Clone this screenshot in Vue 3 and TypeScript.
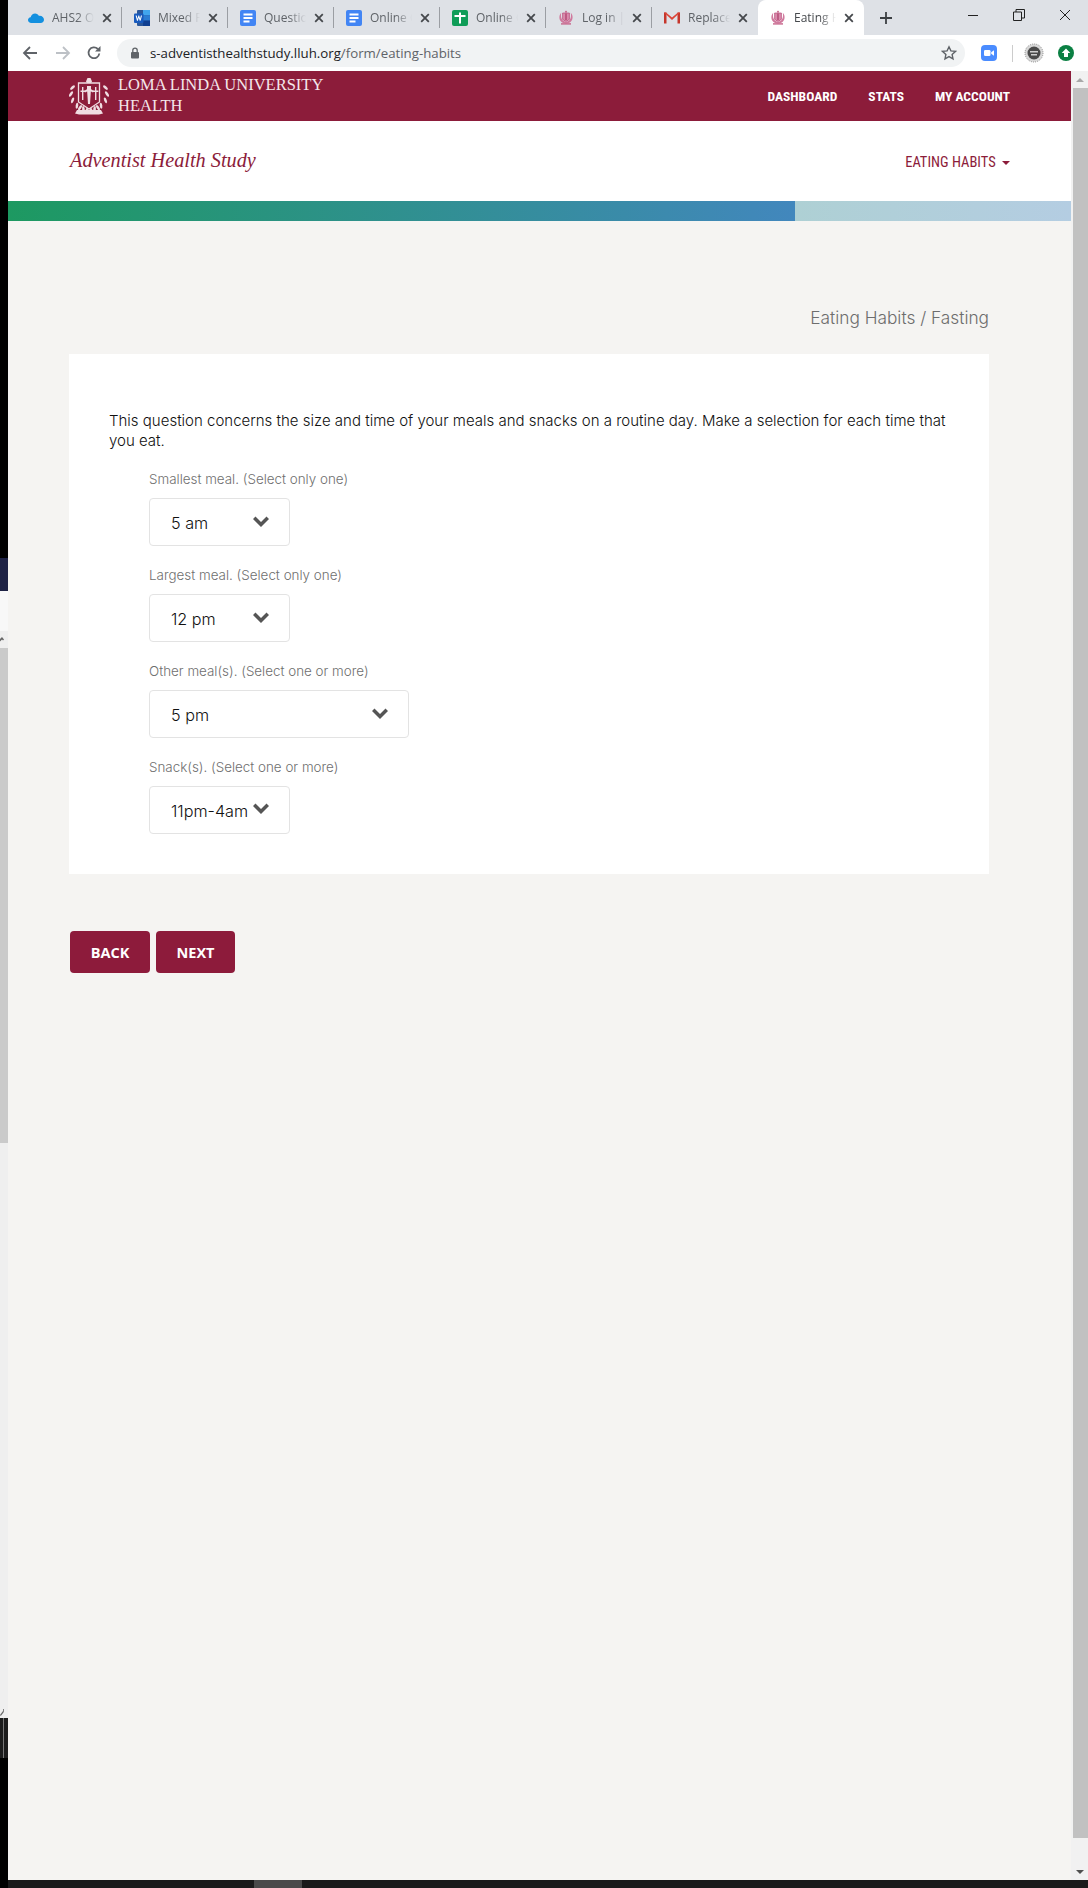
<template>
  <div class="screen">
    <!-- edge of the window behind the browser -->
    <div class="left-strip">
      <div class="seg black" style="height: 558px"></div>
      <div class="seg navy"></div>
      <div class="seg pale"></div>
      <div class="seg arrow-cell">
        <svg width="8" height="17" viewBox="0 0 8 17"><path d="M-3 11l5-5 2 2.500-1 1-1-1-4 4z" fill="#666" /></svg>
      </div>
      <div class="seg thumb-old"></div>
      <div class="seg track-old">
        <svg width="8" height="12" viewBox="0 0 8 12"><path d="M0 9l3-4v-2h0.800v3l-3 4z" fill="#666" /></svg>
      </div>
      <div class="seg dark-old"><span></span></div>
      <div class="seg black grow"></div>
    </div>

    <div class="browser">
      <svg width="0" height="0" class="defs">
        <symbol id="crest" viewBox="0 0 16 16">
          <path d="M8 .5l1.200 1.300L8 3 6.800 1.800z" fill="#c7648a" />
          <path d="M4.600 3h6.800v6.400L8 11.400 4.600 9.400z" fill="#d98bab" stroke="#b84a78" stroke-width=".7" />
          <path d="M7.400 3.600h1.200V10H7.400z" fill="#a93a69" />
          <path d="M3.200 2.800C1 5 .7 9 3 11.600c1.400 1.400 3 1.900 5 2 2-.1 3.600-.6 5-2 2.300-2.600 2-6.600-.2-8.800.5 3 .3 6-1.500 7.500-1 .9-2.100 1.200-3.300 1.300-1.200-.1-2.300-.4-3.300-1.300C2.900 8.800 2.700 5.800 3.200 2.800z" fill="#d07a9e" />
          <path d="M3 13.200h10v1.400H3z" fill="#c7648a" />
        </symbol>
        <symbol id="doc-blue" viewBox="0 0 16 16">
          <rect width="16" height="16" rx="2" fill="#4285f4" />
          <path d="M3.500 3.500h9v2h-9zM3.500 7h9v2h-9zM3.500 10.500h6v2h-6z" fill="#fff" />
        </symbol>
      </svg>

      <div class="tabbar">
        <div
          v-for="(tab, i) in tabs"
          :key="i"
          class="tab"
          :class="{ active: tab.active, 'no-sep': tab.active || tabs[i + 1]?.active }"
        >
          <svg class="tab-icon" width="16" height="16" viewBox="0 0 16 16">
            <path
              v-if="tab.icon === 'cloud'"
              d="M3.300 13C1.400 13 0 11.700 0 10.100c0-1.500 1.100-2.700 2.600-2.900C3.200 5 5 3.500 7.100 3.500c1.700 0 3.200 1 3.900 2.400 2.800-.4 5 1.500 5 3.900 0 1.800-1.400 3.200-3.300 3.200z"
              fill="#1490df"
            />
            <template v-else-if="tab.icon === 'word'">
              <rect x="3" y="0" width="13" height="16" rx="1" fill="#2b579a" />
              <rect x="9" y="0" width="7" height="5.300" fill="#41a5ee" />
              <rect x="9" y="5.300" width="7" height="5.300" fill="#2b7cd3" />
              <rect x="9" y="10.600" width="7" height="5.400" fill="#103f91" />
              <rect x="0" y="3.500" width="9.500" height="9.500" rx="1" fill="#185abd" />
              <path d="M1.600 5.600h1.100l.8 3.200.9-3.200h.8l.9 3.200.8-3.200H8l-1.400 5.200h-.9l-.9-3.100-.9 3.100H3z" fill="#fff" />
            </template>
            <use v-else-if="tab.icon === 'docs'" href="#doc-blue" />
            <template v-else-if="tab.icon === 'sheet'">
              <rect width="16" height="16" rx="2" fill="#0f9d58" />
              <path d="M7 2.500h2V5h4.500v2H9v6.500H7V7H2.500V5H7z" fill="#fff" />
            </template>
            <use v-else-if="tab.icon === 'crest'" href="#crest" />
            <template v-else>
              <path d="M0 2.500h2.500v11H0zM13.500 2.500H16v11h-2.500z" fill="#c5362b" />
              <path d="M0 2.500h2L8 7.500l6-5h2L8 10z" fill="#db4437" />
            </template>
          </svg>
          <span class="tab-title">{{ tab.title }}</span>
          <svg class="tab-close" width="10" height="10" viewBox="0 0 10 10">
            <path d="M1.200 1.200l7.600 7.600M8.800 1.200L1.200 8.800" stroke="#45484c" stroke-width="1.800" />
          </svg>
        </div>
        <svg class="new-tab" width="14" height="14" viewBox="0 0 14 14">
          <path d="M7 1v12M1 7h12" stroke="#3c4043" stroke-width="1.800" />
        </svg>
        <div class="win-buttons">
          <svg width="12" height="12" viewBox="0 0 12 12"><path d="M1 6.500h10" stroke="#222" /></svg>
          <svg width="12" height="12" viewBox="0 0 12 12">
            <path d="M.5 3h8v8.500h-8zM3 3V.5h8.500V9H8.500" fill="none" stroke="#222" />
          </svg>
          <svg width="12" height="12" viewBox="0 0 12 12"><path d="M1 1l10 10M11 1L1 11" stroke="#222" /></svg>
        </div>
      </div>

      <div class="toolbar">
        <svg class="tool back" width="16" height="16" viewBox="0 0 16 16">
          <path d="M15 8H2.500M8 2L2 8l6 6" fill="none" stroke="#5f6368" stroke-width="1.800" />
        </svg>
        <svg class="tool forward" width="16" height="16" viewBox="0 0 16 16">
          <path d="M1 8h12.500M8 2l6 6-6 6" fill="none" stroke="#bdc1c6" stroke-width="1.800" />
        </svg>
        <svg class="tool reload" width="16" height="16" viewBox="0 0 16 16">
          <path d="M13.300 8.500A5.400 5.400 0 1 1 11.800 4" fill="none" stroke="#5f6368" stroke-width="1.800" />
          <path d="M14.500 1v5.500H9z" fill="#5f6368" />
        </svg>
        <div class="omnibox">
          <svg width="10" height="12" viewBox="0 0 10 12">
            <rect x="1" y="5" width="8" height="6.500" rx="1" fill="#5f6368" />
            <path d="M2.800 5.500V3.300a2.200 2.200 0 0 1 4.400 0v2.200" fill="none" stroke="#5f6368" stroke-width="1.300" />
          </svg>
          <span class="url"><b>s-adventisthealthstudy.lluh.org</b>/form/eating-habits</span>
          <svg class="star" width="16" height="16" viewBox="0 0 16 16">
            <path
              d="M8 1.800l1.900 4.100 4.500.5-3.300 3 .9 4.400L8 11.600l-4 2.200.9-4.400-3.300-3 4.500-.5z"
              fill="none"
              stroke="#5f6368"
              stroke-width="1.400"
            />
          </svg>
        </div>
        <svg class="ext-zoom" width="16" height="16" viewBox="0 0 16 16">
          <rect width="16" height="16" rx="4" fill="#4a8cff" />
          <rect x="3" y="5" width="6.500" height="6" rx="1.300" fill="#fff" />
          <path d="M10.200 7.300l2.800-2v5.400l-2.800-2z" fill="#fff" />
        </svg>
        <span class="ext-sep"></span>
        <svg class="ext-seal" width="20" height="20" viewBox="0 0 20 20">
          <circle cx="10" cy="10" r="9" fill="#d8d8d8" stroke="#8a8a8a" stroke-dasharray="1 1" />
          <circle cx="10" cy="10" r="6.500" fill="#4a4a4a" />
          <path d="M6 8h8v1.500H6zM7 11h6v1.500H7z" fill="#cfcfcf" />
        </svg>
        <svg class="ext-up" width="16" height="16" viewBox="0 0 16 16">
          <circle cx="8" cy="8" r="8" fill="#0b8043" />
          <path d="M8 3.500L12.300 8H10v4H6V8H3.700z" fill="#fff" />
        </svg>
      </div>

      <div class="viewport">
        <div class="page">
          <header class="top-bar">
            <div class="brand">
              <svg class="seal" width="40" height="37" viewBox="0 0 40 37">
                <g fill="#f0dde2">
                  <ellipse
                    v-for="(leaf, n) in laurel"
                    :key="n"
                    rx="1.300"
                    ry="3"
                    :transform="`translate(${leaf.x} ${leaf.y}) rotate(${leaf.angle})`"
                  />
                  <path d="M8 32h24l2 3.500-4 1H10l-4-1z" />
                  <path d="M18.500 0h3l1.500 3.500-1 1.500h-4L17 3.500z" />
                </g>
                <path d="M9.500 5h21v19L20 31 9.500 24z" fill="#8c1c3a" stroke="#f0dde2" stroke-width="1.300" />
                <path d="M18 8h4v3l-1 15h-2L18 11zM15 13l5-3 5 3-1 1.500-4-2-4 2z" fill="#f0dde2" />
                <path d="M13 9h1.400v13H13zM26 9h1.400v13H26zM24 12.500h5.400v1.400H24zM11.500 12.500h4.400v1.400h-4.400z" fill="#f0dde2" />
              </svg>
              <div class="brand-name">LOMA LINDA UNIVERSITY<br />HEALTH</div>
            </div>
            <nav class="main-nav">
              <a v-for="link in navLinks" :key="link">{{ link }}</a>
            </nav>
          </header>

          <div class="sub-bar">
            <div class="study-name">Adventist Health Study</div>
            <div class="section-menu">EATING HABITS <i class="caret"></i></div>
          </div>

          <div class="progress">
            <div class="progress-fill" :style="{ width: progress + '%' }"></div>
          </div>

          <main class="content">
            <div class="crumb">Eating Habits / Fasting</div>
            <section class="card">
              <p class="intro">
                This question concerns the size and time of your meals and snacks on a routine day. Make a selection for
                each time that you eat.
              </p>
              <div v-for="field in fields" :key="field.label" class="field">
                <label>{{ field.label }}</label>
                <div class="picker" :class="{ wide: field.wide }">
                  <span>{{ field.value }}</span>
                  <svg
                    class="chevron"
                    :class="{ nudge: field.value.length > 6 }"
                    width="16"
                    height="11"
                    viewBox="0 0 16 11"
                  >
                    <path d="M0 3l2.500-2.500L8 6l5.500-5.500L16 3l-8 8z" fill="#555" />
                  </svg>
                </div>
              </div>
            </section>
            <div class="actions">
              <button type="button">BACK</button>
              <button type="button">NEXT</button>
            </div>
          </main>
        </div>

        <div class="scrollbar">
          <div class="sb-btn"><i class="tri up"></i></div>
          <div class="sb-thumb"></div>
          <div class="sb-rest"></div>
          <div class="sb-btn"><i class="tri down"></i></div>
        </div>
      </div>

      <footer class="taskbar">
        <span class="task-active"></span>
        <span class="clock">3:08 PM</span>
      </footer>
    </div>
  </div>
</template>

<script setup lang="ts">
interface Tab {
  title: string
  icon: string
  active?: boolean
}

interface Field {
  label: string
  value: string
  wide?: boolean
}

const tabs: Tab[] = [
  { title: 'AHS2 OneDrive', icon: 'cloud' },
  { title: 'Mixed Foods', icon: 'word' },
  { title: 'Questions', icon: 'docs' },
  { title: 'Online Chat', icon: 'docs' },
  { title: 'Online Chat', icon: 'sheet' },
  { title: 'Log in | Health', icon: 'crest' },
  { title: 'Replace Mail', icon: 'gmail' },
  { title: 'Eating Habits', icon: 'crest', active: true },
]

const navLinks = ['DASHBOARD', 'STATS', 'MY ACCOUNT']

const progress = (787 / 1063) * 100

const fields: Field[] = [
  { label: 'Smallest meal. (Select only one)', value: '5 am' },
  { label: 'Largest meal. (Select only one)', value: '12 pm' },
  { label: 'Other meal(s). (Select one or more)', value: '5 pm', wide: true },
  { label: 'Snack(s). (Select one or more)', value: '11pm-4am' },
]

// leaves of the wreath round the seal, mirrored left and right
const laurel = [0, 1, 2, 3, 4, 5, 6].flatMap((n) => {
  const a = ((150 + n * 24) * Math.PI) / 180
  const x = 18 * Math.sin(a)
  const y = 16 - 15 * Math.cos(a) * 1.05
  const angle = n * 14 - 35
  return [
    { x: 20 - x, y, angle: -angle },
    { x: 20 + x, y, angle },
  ]
})
</script>

<style>
html,
body {
  margin: 0;
  background: #000;
}
</style>

<style scoped>
.screen {
  display: flex;
  width: 1088px;
  height: 1888px;
  overflow: hidden;
  font-family: Inter, 'Liberation Sans', sans-serif;
}

.left-strip {
  display: flex;
  flex-direction: column;
  flex: 0 0 8px;
}

.seg {
  overflow: hidden;
}

.seg svg {
  display: block;
}

.black {
  background: #000;
}

.grow {
  flex: 1;
}

.navy {
  height: 33px;
  background: #1e2245;
}

.pale {
  height: 40px;
  background: #f8f8f8;
}

.arrow-cell {
  height: 17px;
  background: #efefef;
}

.thumb-old {
  height: 495px;
  background: #cacaca;
}

.track-old {
  height: 575px;
  display: flex;
  align-items: flex-end;
  background: #efefef;
}

.dark-old {
  height: 40px;
  background: #1c1c1c;
}

.dark-old span {
  display: block;
  width: 1px;
  height: 40px;
  margin-left: 3px;
  background: #777;
}

.browser {
  flex: 1;
  display: flex;
  flex-direction: column;
  min-width: 0;
  background: #f5f4f2;
}

.defs {
  position: absolute;
}

.tabbar {
  display: flex;
  align-items: center;
  height: 35px;
  padding-left: 8px;
  background: #dee1e6;
  flex: none;
}

.tab {
  position: relative;
  display: flex;
  align-items: center;
  width: 106px;
  height: 35px;
  padding-left: 12px;
  box-sizing: border-box;
  color: #5f6368;
  font-family: 'Open Sans', sans-serif;
  font-size: 12px;
}

.tab:not(.no-sep)::after {
  content: '';
  position: absolute;
  right: 0;
  top: 7px;
  height: 21px;
  width: 1px;
  background: #9b9ea3;
}

.tab.active {
  height: 35px;
  background: #fff;
  border-radius: 8px 8px 0 0;
  color: #45484c;
}

.tab-icon {
  flex: none;
}

.tab-title {
  width: 42px;
  margin-left: 8px;
  overflow: hidden;
  white-space: nowrap;
  -webkit-mask-image: linear-gradient(90deg, #000 60%, transparent);
  mask-image: linear-gradient(90deg, #000 60%, transparent);
}

.tab-close {
  margin-left: 8px;
  flex: none;
}

.new-tab {
  margin-left: 15px;
}

.win-buttons {
  display: flex;
  gap: 34px;
  margin-left: auto;
  margin-right: 17px;
  margin-bottom: 6px;
}

.toolbar {
  display: flex;
  align-items: center;
  height: 36px;
  background: #fff;
  flex: none;
}

.tool {
  flex: none;
}

.back {
  margin-left: 14px;
}

.forward {
  margin-left: 17px;
}

.reload {
  margin-left: 15px;
}

.omnibox {
  display: flex;
  align-items: center;
  width: 848px;
  height: 28px;
  margin-left: 15px;
  padding-left: 13px;
  box-sizing: border-box;
  background: #f1f3f4;
  border-radius: 14px;
}

.url {
  margin-left: 10px;
  color: #5f6368;
  font-family: 'Open Sans', sans-serif;
  font-size: 13.250px;
  white-space: nowrap;
}

.url b {
  color: #202124;
  font-weight: 400;
}

.star {
  margin-left: auto;
  margin-right: 8px;
}

.ext-zoom {
  margin-left: 16px;
  flex: none;
}

.ext-sep {
  width: 1px;
  height: 17px;
  margin-left: 15px;
  background: #ccc;
}

.ext-seal {
  margin-left: 11px;
  flex: none;
}

.ext-up {
  margin-left: 14px;
  flex: none;
}

.viewport {
  flex: 1;
  display: flex;
  min-height: 0;
}

.page {
  flex: 1;
  min-width: 0;
  background: #f5f4f2;
}

.top-bar {
  display: flex;
  align-items: center;
  justify-content: space-between;
  height: 50px;
  padding: 0 61px;
  background: #8c1c3a;
}

.brand {
  display: flex;
  align-items: center;
}

.seal {
  flex: none;
}

.brand-name {
  margin: -2px 0 0 9px;
  color: #f4e6ea;
  font-family: 'Liberation Serif', serif;
  font-size: 16.500px;
  line-height: 21px;
}

.main-nav {
  display: flex;
  gap: 31px;
  color: #fff;
  font-family: 'Roboto Condensed', Roboto, sans-serif;
  font-stretch: 75%;
  font-size: 13.500px;
  font-weight: 700;
}

.sub-bar {
  display: flex;
  align-items: center;
  justify-content: space-between;
  height: 80px;
  padding: 0 61px 0 62px;
  background: #fff;
  box-sizing: border-box;
}

.study-name {
  margin-top: -2px;
  color: #8c1c3a;
  font-family: 'Liberation Serif', serif;
  font-size: 20.300px;
  font-style: italic;
}

.section-menu {
  margin-top: 3px;
  color: #8c1c3a;
  font-family: 'Roboto Condensed', Roboto, sans-serif;
  font-stretch: 75%;
  font-size: 14.500px;
}

.caret {
  display: inline-block;
  margin-left: 3px;
  vertical-align: middle;
  border-left: 4px solid transparent;
  border-right: 4px solid transparent;
  border-top: 4px solid #8c1c3a;
}

.progress {
  height: 20px;
  background: linear-gradient(90deg, #aed0d4 74%, #b4cde2);
}

.progress-fill {
  height: 100%;
  background: linear-gradient(90deg, #1d9961, #4287bd);
}

.content {
  width: 920px;
  margin-left: 61px;
}

.crumb {
  padding-top: 85px;
  height: 48px;
  color: #6d6d6d;
  font-size: 17.300px;
  font-weight: 300;
  line-height: 24px;
  text-align: right;
}

.card {
  padding: 57px 40px 40px;
  background: #fff;
}

.intro {
  margin: 0 0 18px;
  color: #111;
  font-size: 15px;
  font-weight: 300;
  line-height: 20px;
}

.field {
  padding-left: 40px;
  margin-bottom: 19px;
}

.field:last-child {
  margin-bottom: 0;
}

.field label {
  display: block;
  height: 20px;
  margin-bottom: 9px;
  color: #6f6f6f;
  font-size: 13.400px;
  font-weight: 300;
  line-height: 20px;
}

.picker {
  display: flex;
  align-items: center;
  justify-content: space-between;
  width: 141px;
  height: 48px;
  padding: 2px 20px 0 21px;
  box-sizing: border-box;
  background: #fff;
  border: 1px solid #e3e3e3;
  border-radius: 4px;
  color: #111;
  font-size: 16.200px;
  font-weight: 300;
  white-space: nowrap;
}

.picker.wide {
  width: 260px;
}

.chevron {
  flex: none;
  margin-top: -4px;
}

.chevron.nudge {
  margin-top: -6px;
}

.actions {
  display: flex;
  gap: 6px;
  margin: 57px 0 0 1px;
}

.actions button {
  height: 42px;
  width: 80px;
  padding: 0;
  background: #8d1b3b;
  border: 0;
  border-radius: 4px;
  color: #fff;
  font-family: 'Open Sans', sans-serif;
  font-size: 14.500px;
  font-weight: 700;
}

.actions button:last-child {
  width: 79px;
}

.scrollbar {
  display: flex;
  flex-direction: column;
  flex: 0 0 17px;
  background: #f1f1f1;
}

.sb-btn {
  display: flex;
  align-items: center;
  justify-content: center;
  height: 17px;
  flex: none;
}

.tri {
  width: 0;
  height: 0;
  border-left: 4px solid transparent;
  border-right: 4px solid transparent;
}

.tri.up {
  border-bottom: 4px solid #a8a8a8;
}

.tri.down {
  border-top: 4px solid #505050;
}

.sb-thumb {
  height: 1750px;
  margin-left: 2px;
  background: #c1c1c1;
  flex: none;
}

.sb-rest {
  flex: 1;
}

.taskbar {
  display: flex;
  height: 8px;
  overflow: hidden;
  background: #1a1a1a;
  flex: none;
}

.task-active {
  width: 48px;
  margin-left: 246px;
  background: #4a4a4a;
}

.clock {
  margin-left: auto;
  margin-right: 11px;
  padding-top: 5px;
  color: #fff;
  font-family: 'Open Sans', sans-serif;
  font-size: 12px;
  line-height: 16px;
}
</style>
